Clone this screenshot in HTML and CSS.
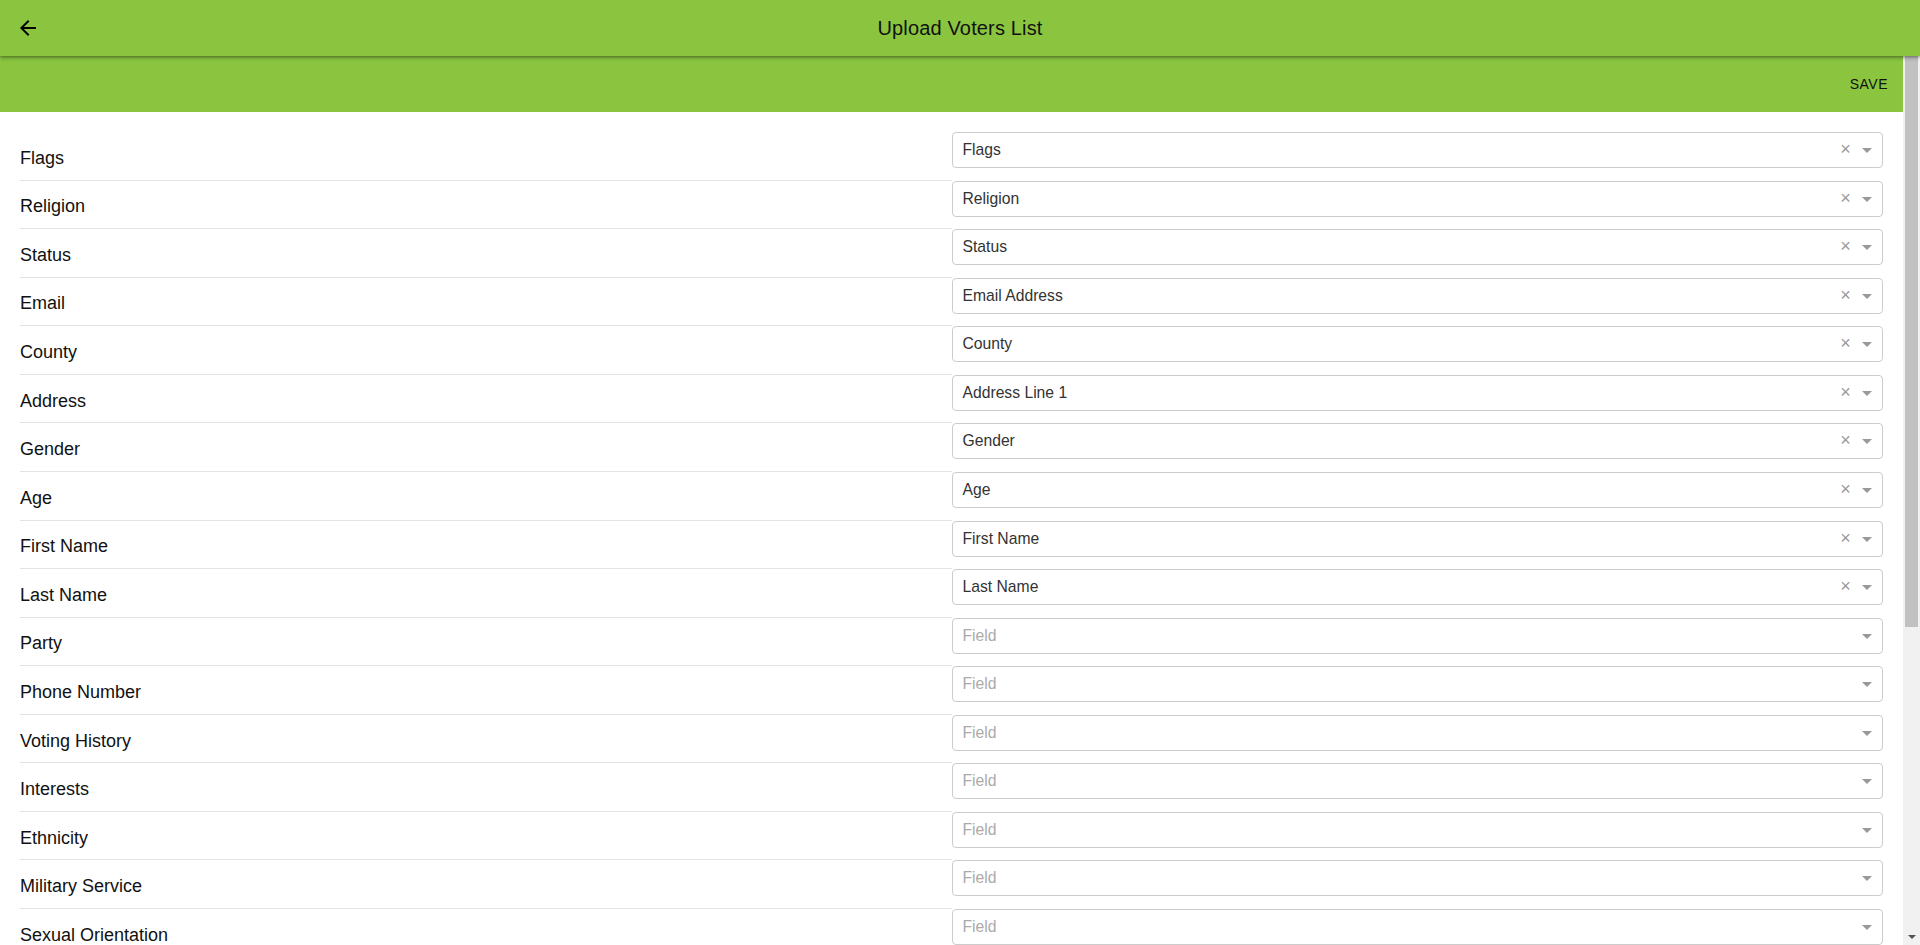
FILE: index.html
```html
<!DOCTYPE html>
<html lang="en">
<head>
<meta charset="utf-8">
<title>Upload Voters List</title>
<link rel="stylesheet" href="styles.css">
</head>
<body>
<header class="appbar">
  <div class="appbar-left">
    <button class="icon-btn" aria-label="Back">
      <svg width="24" height="24" viewBox="0 0 24 24"><path d="M20 11H7.83l5.59-5.59L12 4l-8 8 8 8 1.41-1.41L7.83 13H20v-2z" fill="#000"/></svg>
    </button>
  </div>
  <h1 class="appbar-title">Upload Voters List</h1>
  <div class="appbar-right"></div>
</header>
<div class="body-wrap">
<main class="scroller">
  <div class="toolbar"><button class="save-btn">SAVE</button></div>
  <div class="list">
    <div class="row"><div class="label">Flags</div><div class="field"><div class="select"><span class="value">Flags</span><span class="clear">×</span><span class="arrow"></span></div></div></div>
    <div class="row"><div class="label">Religion</div><div class="field"><div class="select"><span class="value">Religion</span><span class="clear">×</span><span class="arrow"></span></div></div></div>
    <div class="row"><div class="label">Status</div><div class="field"><div class="select"><span class="value">Status</span><span class="clear">×</span><span class="arrow"></span></div></div></div>
    <div class="row"><div class="label">Email</div><div class="field"><div class="select"><span class="value">Email Address</span><span class="clear">×</span><span class="arrow"></span></div></div></div>
    <div class="row"><div class="label">County</div><div class="field"><div class="select"><span class="value">County</span><span class="clear">×</span><span class="arrow"></span></div></div></div>
    <div class="row"><div class="label">Address</div><div class="field"><div class="select"><span class="value">Address Line 1</span><span class="clear">×</span><span class="arrow"></span></div></div></div>
    <div class="row"><div class="label">Gender</div><div class="field"><div class="select"><span class="value">Gender</span><span class="clear">×</span><span class="arrow"></span></div></div></div>
    <div class="row"><div class="label">Age</div><div class="field"><div class="select"><span class="value">Age</span><span class="clear">×</span><span class="arrow"></span></div></div></div>
    <div class="row"><div class="label">First Name</div><div class="field"><div class="select"><span class="value">First Name</span><span class="clear">×</span><span class="arrow"></span></div></div></div>
    <div class="row"><div class="label">Last Name</div><div class="field"><div class="select"><span class="value">Last Name</span><span class="clear">×</span><span class="arrow"></span></div></div></div>
    <div class="row"><div class="label">Party</div><div class="field"><div class="select"><span class="placeholder">Field</span><span class="arrow"></span></div></div></div>
    <div class="row"><div class="label">Phone Number</div><div class="field"><div class="select"><span class="placeholder">Field</span><span class="arrow"></span></div></div></div>
    <div class="row"><div class="label">Voting History</div><div class="field"><div class="select"><span class="placeholder">Field</span><span class="arrow"></span></div></div></div>
    <div class="row"><div class="label">Interests</div><div class="field"><div class="select"><span class="placeholder">Field</span><span class="arrow"></span></div></div></div>
    <div class="row"><div class="label">Ethnicity</div><div class="field"><div class="select"><span class="placeholder">Field</span><span class="arrow"></span></div></div></div>
    <div class="row"><div class="label">Military Service</div><div class="field"><div class="select"><span class="placeholder">Field</span><span class="arrow"></span></div></div></div>
    <div class="row"><div class="label">Sexual Orientation</div><div class="field"><div class="select"><span class="placeholder">Field</span><span class="arrow"></span></div></div></div>
  </div>
</main>
<div class="scrollbar" aria-hidden="true">
  <div class="thumb"></div>
  <div class="track-rest"></div>
  <div class="down-btn"></div>
</div>
</div>
</body>
</html>
```
FILE: styles.css
```css
* { box-sizing: border-box; }
html, body { margin: 0; height: 100%; }
body {
  display: flex;
  flex-direction: column;
  overflow: hidden;
  font-family: "Liberation Sans", Arial, sans-serif;
  color: #111;
  background: #fff;
}
.appbar {
  flex: none;
  height: 56px;
  background: #8bc53f;
  display: grid;
  grid-template-columns: 1fr auto 1fr;
  align-items: center;
  position: relative;
  z-index: 2;
  box-shadow: 0 2px 4px rgba(0, 0, 0, 0.28), 0 1px 2px rgba(0, 0, 0, 0.2);
}
.appbar-left { display: flex; align-items: center; padding-left: 16px; }
.icon-btn {
  border: 0;
  background: none;
  padding: 0;
  width: 24px;
  height: 24px;
  display: flex;
  cursor: pointer;
}
.appbar-title {
  margin: 0;
  font-size: 20px;
  font-weight: 400;
  color: #111;
  letter-spacing: 0.15px;
}
.body-wrap {
  flex: 1;
  display: flex;
  min-height: 0;
}
.scroller {
  flex: 1;
  min-width: 0;
  overflow: hidden;
}
.scrollbar {
  flex: none;
  width: 17px;
  background: #f1f1f1;
  display: flex;
  flex-direction: column;
  padding: 0 2px;
}
.thumb {
  height: 571px;
  background: #c1c1c1;
}
.track-rest { flex: 1; }
.down-btn {
  height: 17px;
  display: flex;
  justify-content: center;
  align-items: center;
}
.down-btn::before {
  content: "";
  border-style: solid;
  border-width: 4px 4px 0;
  border-color: #505050 transparent transparent;
}
.toolbar {
  height: 56px;
  background: #8bc53f;
  display: flex;
  justify-content: flex-end;
  align-items: center;
  padding-right: 15px;
}
.save-btn {
  border: 0;
  background: none;
  padding: 0;
  font-family: inherit;
  font-size: 14px;
  letter-spacing: 0.5px;
  color: #111;
  cursor: pointer;
}
.list { padding: 20px 20px 20px; }
.row {
  display: grid;
  grid-template-columns: 1fr 1fr;
  height: 48.57px;
}
.label {
  display: flex;
  align-items: center;
  font-size: 18px;
  color: #111;
  border-bottom: 1px solid #e3e3e3;
  padding-top: 5px;
}
.select {
  height: 36px;
  border: 1px solid #ccc;
  border-radius: 4px;
  display: flex;
  align-items: center;
  padding-left: 10px;
  background: #fff;
}
.value, .placeholder {
  flex: 1;
  font-size: 15.7px;
  color: #333;
}
.placeholder { color: #aaa; }
.clear {
  width: 17px;
  margin-right: 3px;
  text-align: center;
  color: #999;
  font-size: 18px;
  line-height: 1;
  margin-top: -2px;
}
.arrow {
  width: 25px;
  padding-right: 5px;
  display: flex;
  justify-content: center;
}
.arrow::before {
  content: "";
  border-style: solid;
  border-width: 5px 5px 2.5px;
  border-color: #999 transparent transparent;
  margin-top: 3px;
}
```
